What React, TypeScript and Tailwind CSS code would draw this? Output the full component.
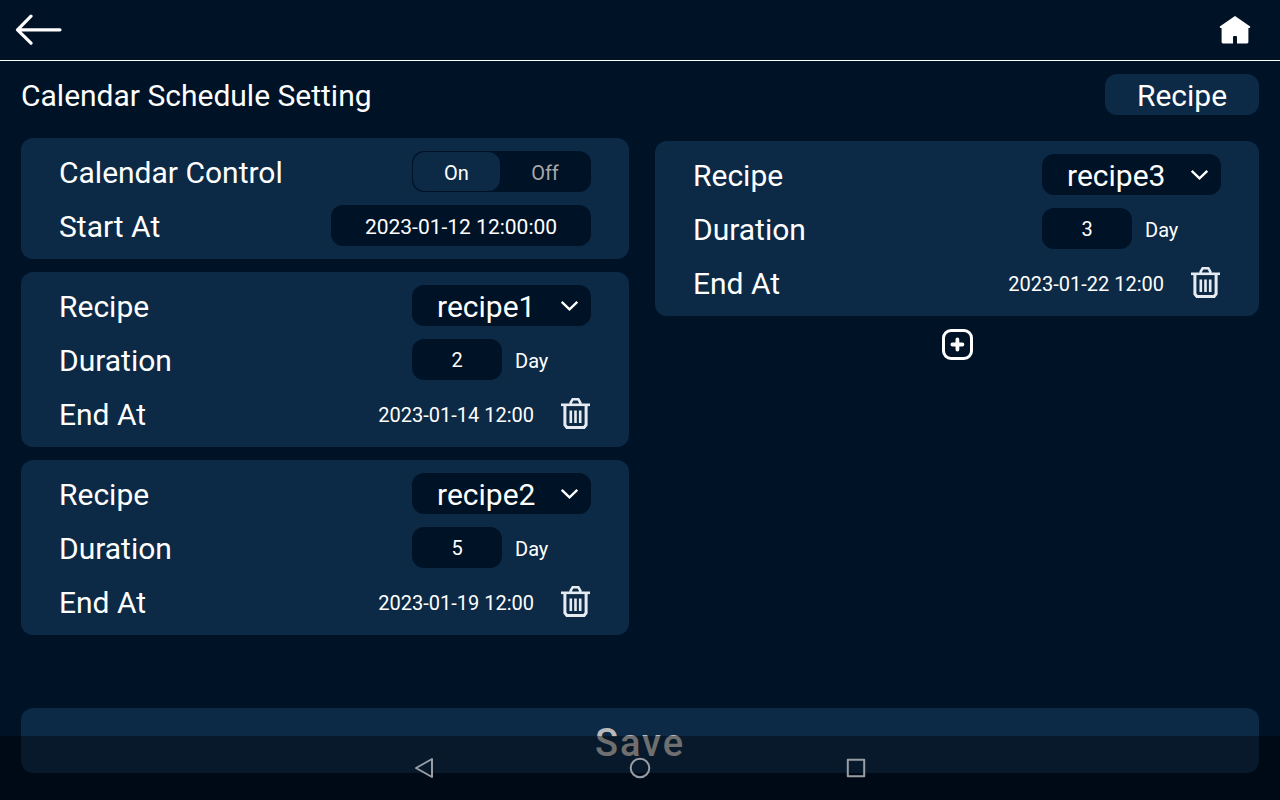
import { useState } from "react";
import type { ReactNode } from "react";

type RecipeEntry = { id: number; recipe: string; days: string; endAt: string };

const RECIPES = ["recipe1", "recipe2", "recipe3"];

const ENTRIES: RecipeEntry[] = [
  { id: 1, recipe: "recipe1", days: "2", endAt: "2023-01-14 12:00" },
  { id: 2, recipe: "recipe2", days: "5", endAt: "2023-01-19 12:00" },
  { id: 3, recipe: "recipe3", days: "3", endAt: "2023-01-22 12:00" },
];

function BackIcon() {
  return (
    <svg width="48" height="32" viewBox="0 0 48 32" fill="none" stroke="white" strokeWidth="3.2" strokeLinecap="round" strokeLinejoin="round" aria-hidden="true">
      <path d="M2.5 15.8H45M16 2.2L2.5 15.8L16 29.2" />
    </svg>
  );
}

function HomeIcon() {
  return (
    <svg width="32" height="28" viewBox="0 0 32 28" fill="white" aria-hidden="true">
      <path d="M16 0L31.2 10.6Q31.4 12 30.4 12H29.4V26Q29.4 27.4 28 27.4H18V21Q18 20 17 20H15Q14 20 14 21V27.4H4Q2.6 27.4 2.6 26V12H1.6Q0.6 12 0.8 10.6Z" />
    </svg>
  );
}

function ChevronIcon() {
  return (
    <svg className="pointer-events-none absolute top-4 right-3" width="19" height="11" viewBox="0 0 19 11" fill="none" stroke="white" strokeWidth="2.4" aria-hidden="true">
      <path d="M1.7 0.9L9.5 8.4L17.3 0.9" />
    </svg>
  );
}

function TrashIcon() {
  return (
    <svg width="31" height="33" viewBox="0 0 31 33" fill="none" stroke="#e6ebf2" aria-hidden="true">
      <path strokeWidth="2.6" d="M1 7.8H30" />
      <path strokeWidth="2.6" d="M10.7 8V5.5L12.7 2.2H18.3L20.3 5.5V8" />
      <path strokeWidth="3" d="M4.9 8.5V28L6.9 30.5H24.1L26.1 28V8.5" />
      <path strokeWidth="2.6" d="M10.8 13.5V26M15.5 13.5V26M20.2 13.5V26" />
    </svg>
  );
}

function PlusIcon() {
  return (
    <svg width="32" height="32" viewBox="0 0 32 32" fill="none" stroke="white" strokeWidth="3" strokeLinecap="round" aria-hidden="true">
      <rect x="2.5" y="1.5" width="28" height="28" rx="7.5" />
      <path strokeWidth="3.8" d="M16.4 10.5V20.5M11.4 15.5H21.4" />
    </svg>
  );
}

function Card({ children }: { children: ReactNode }) {
  return <section className="flex flex-col gap-[13px] rounded-xl bg-[#0c2a46] px-[38px] py-[13px]">{children}</section>;
}

function Row({ label, htmlFor, children }: { label: string; htmlFor?: string; children: ReactNode }) {
  return (
    <div className="flex h-[41px] items-center justify-between">
      {htmlFor ? (
        <label htmlFor={htmlFor} className="pt-0.5">
          {label}
        </label>
      ) : (
        <span className="pt-0.5">{label}</span>
      )}
      {children}
    </div>
  );
}

function RecipeCard({ entry }: { entry: RecipeEntry }) {
  const recipeId = `recipe-${entry.id}`;
  const daysId = `days-${entry.id}`;
  return (
    <Card>
      <Row label="Recipe" htmlFor={recipeId}>
        <div className="relative w-[179px]">
          <select id={recipeId} defaultValue={entry.recipe} className="h-[41px] w-full appearance-none rounded-xl bg-[#001226] pt-0.5 pr-9 pl-[25px]">
            {RECIPES.map((name) => (
              <option key={name}>{name}</option>
            ))}
          </select>
          <ChevronIcon />
        </div>
      </Row>
      <Row label="Duration" htmlFor={daysId}>
        <div className="flex w-[179px] items-center gap-[13px] text-xl">
          <input id={daysId} defaultValue={entry.days} inputMode="numeric" className="h-[41px] w-[90px] rounded-xl bg-[#001226] text-center" />
          <span className="pt-0.5">Day</span>
        </div>
      </Row>
      <Row label="End At">
        <div className="flex items-center gap-[26px] text-xl">
          <time className="pt-0.5">{entry.endAt}</time>
          <button type="button" aria-label="Delete">
            <TrashIcon />
          </button>
        </div>
      </Row>
    </Card>
  );
}

function Toggle() {
  const [on, setOn] = useState(true);
  const selected = "rounded-xl bg-[#0c2a46] pt-0.5 text-white";
  const idle = "rounded-xl pt-0.5 text-[#a8a8a8]";
  return (
    <div role="group" aria-label="Calendar Control" className="grid h-[41px] w-[179px] grid-cols-[87fr_90fr] rounded-xl bg-[#001226] p-px text-xl">
      <button type="button" aria-pressed={on} onClick={() => setOn(true)} className={on ? selected : idle}>
        On
      </button>
      <button type="button" aria-pressed={!on} onClick={() => setOn(false)} className={on ? idle : selected}>
        Off
      </button>
    </div>
  );
}

export default function App() {
  return (
    <div className="flex min-h-screen flex-col bg-[#001226] font-['Roboto',sans-serif] text-[30px] leading-9 text-white">
      <header className="flex h-[61px] items-center justify-between border-b border-white pr-[29px] pl-[15px]">
        <button type="button" aria-label="Back">
          <BackIcon />
        </button>
        <a href="#home" aria-label="Home">
          <HomeIcon />
        </a>
      </header>

      <main className="flex flex-1 flex-col px-[21px] pt-[13px] pb-[27px]">
        <div className="flex items-center justify-between">
          <h1 className="pt-0.5">Calendar Schedule Setting</h1>
          <button type="button" className="h-[41px] w-[154px] rounded-xl bg-[#0c2a46] pt-0.5">
            Recipe
          </button>
        </div>

        <div className="grid flex-1 grid-cols-[608fr_604fr] items-start gap-[26px] pt-[23px] pb-[13px]">
          <div className="flex flex-col gap-[13px]">
            <Card>
              <Row label="Calendar Control">
                <Toggle />
              </Row>
              <Row label="Start At" htmlFor="start-at">
                <input id="start-at" defaultValue="2023-01-12 12:00:00" className="h-[41px] w-[260px] rounded-xl bg-[#001226] pt-0.5 text-center text-[21px]" />
              </Row>
            </Card>
            <RecipeCard entry={ENTRIES[0]} />
            <RecipeCard entry={ENTRIES[1]} />
          </div>
          <div className="flex flex-col gap-[13px] pt-[3px]">
            <RecipeCard entry={ENTRIES[2]} />
            <button type="button" aria-label="Add recipe" className="self-center">
              <PlusIcon />
            </button>
          </div>
        </div>

        <button type="button" className="h-[65px] rounded-xl bg-[#0c2a46] pt-1 text-[38px] font-medium tracking-wider text-[#bababa]">
          Save
        </button>
      </main>

      <nav aria-label="System" className="fixed inset-x-0 bottom-0 flex h-16 items-center justify-center bg-black/40">
        <button type="button" aria-label="Back" className="flex w-[216px] justify-center">
          <svg width="22" height="22" viewBox="0 0 22 22" fill="none" stroke="#999ea4" strokeWidth="2" strokeLinejoin="round" aria-hidden="true">
            <path d="M19 2V20L3 11Z" />
          </svg>
        </button>
        <button type="button" aria-label="Home" className="flex w-[216px] justify-center">
          <svg width="22" height="22" viewBox="0 0 22 22" fill="none" stroke="#999ea4" strokeWidth="2" aria-hidden="true">
            <circle cx="11" cy="11" r="9.3" />
          </svg>
        </button>
        <button type="button" aria-label="Recent apps" className="flex w-[216px] justify-center">
          <svg width="22" height="22" viewBox="0 0 22 22" fill="none" stroke="#999ea4" strokeWidth="2" strokeLinejoin="round" aria-hidden="true">
            <rect x="2.8" y="2.8" width="16.4" height="16.4" />
          </svg>
        </button>
      </nav>
    </div>
  );
}
